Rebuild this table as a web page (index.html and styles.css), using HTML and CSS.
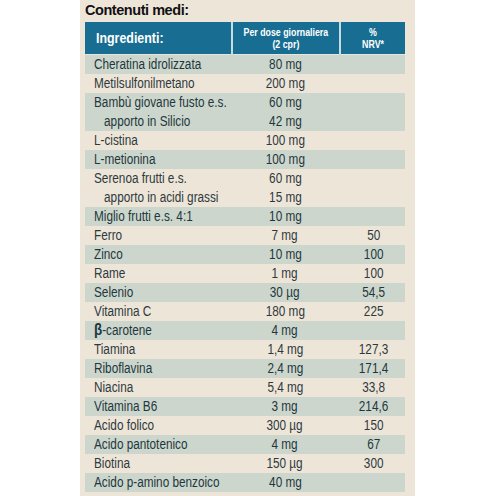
FILE: index.html
```html
<!DOCTYPE html>
<html lang="it">
<head>
  <meta charset="UTF-8">
  <meta name="viewport" content="width=device-width, initial-scale=1">
  <title>Contenuti medi</title>
  <link rel="stylesheet" href="styles.css">
</head>
<body>
  <div class="paper">
    <h2 class="title">Contenuti medi:</h2>

    <!-- Tabella dei contenuti -->
    <table class="facts">
      <thead>
        <tr>
          <th class="c-name"><span class="t">Ingredienti:</span></th>
          <th class="c-dose"><span class="t">Per dose giornaliera<br>(2 cpr)</span></th>
          <th class="c-nrv"><span class="t">%<br>NRV*</span></th>
        </tr>
      </thead>
      <tbody>
        <tr class="shade"><td><span class="t">Cheratina idrolizzata</span></td><td><span class="t">80 mg</span></td><td></td></tr>
        <tr><td><span class="t">Metilsulfonilmetano</span></td><td><span class="t">200 mg</span></td><td></td></tr>
        <tr class="shade"><td><span class="t">Bambù giovane fusto e.s.<br><span class="sub">apporto in Silicio</span></span></td><td><span class="t">60 mg<br>42 mg</span></td><td></td></tr>
        <tr><td><span class="t">L-cistina</span></td><td><span class="t">100 mg</span></td><td></td></tr>
        <tr class="shade"><td><span class="t">L-metionina</span></td><td><span class="t">100 mg</span></td><td></td></tr>
        <tr><td><span class="t">Serenoa frutti e.s.<br><span class="sub">apporto in acidi grassi</span></span></td><td><span class="t">60 mg<br>15 mg</span></td><td></td></tr>
        <tr class="shade"><td><span class="t">Miglio frutti e.s. 4:1</span></td><td><span class="t">10 mg</span></td><td></td></tr>
        <tr><td><span class="t">Ferro</span></td><td><span class="t">7 mg</span></td><td><span class="t">50</span></td></tr>
        <tr class="shade"><td><span class="t">Zinco</span></td><td><span class="t">10 mg</span></td><td><span class="t">100</span></td></tr>
        <tr><td><span class="t">Rame</span></td><td><span class="t">1 mg</span></td><td><span class="t">100</span></td></tr>
        <tr class="shade"><td><span class="t">Selenio</span></td><td><span class="t">30 µg</span></td><td><span class="t">54,5</span></td></tr>
        <tr><td><span class="t">Vitamina C</span></td><td><span class="t">180 mg</span></td><td><span class="t">225</span></td></tr>
        <tr class="shade"><td><span class="t"><b class="beta">β</b>-carotene</span></td><td><span class="t">4 mg</span></td><td></td></tr>
        <tr><td><span class="t">Tiamina</span></td><td><span class="t">1,4 mg</span></td><td><span class="t">127,3</span></td></tr>
        <tr class="shade"><td><span class="t">Riboflavina</span></td><td><span class="t">2,4 mg</span></td><td><span class="t">171,4</span></td></tr>
        <tr><td><span class="t">Niacina</span></td><td><span class="t">5,4 mg</span></td><td><span class="t">33,8</span></td></tr>
        <tr class="shade"><td><span class="t">Vitamina B6</span></td><td><span class="t">3 mg</span></td><td><span class="t">214,6</span></td></tr>
        <tr><td><span class="t">Acido folico</span></td><td><span class="t">300 µg</span></td><td><span class="t">150</span></td></tr>
        <tr class="shade"><td><span class="t">Acido pantotenico</span></td><td><span class="t">4 mg</span></td><td><span class="t">67</span></td></tr>
        <tr><td><span class="t">Biotina</span></td><td><span class="t">150 µg</span></td><td><span class="t">300</span></td></tr>
        <tr class="shade"><td><span class="t">Acido p-amino benzoico</span></td><td><span class="t">40 mg</span></td><td></td></tr>
      </tbody>
    </table>
  </div>
</body>
</html>
```

FILE: styles.css
```css
* {
  box-sizing: border-box;
  margin: 0;
  padding: 0;
}

body {
  background-color: #fff;
  font-family: 'Liberation Sans', Arial, sans-serif;
}

/* Foglio della confezione */
.paper {
  margin-left: 80px;
  width: 335px;
  height: 496px;
  background-color: #eee5d9;
  padding: 2px 0 0 5px;
  overflow: hidden;
}

.title {
  font-size: 14.5px;
  font-weight: bold;
  color: #111;
  line-height: 17px;
  letter-spacing: -0.45px;
  margin-bottom: 3px;
}

/* Testo stretto (condensed) */
.t {
  display: inline-block;
  transform: scaleX(0.84);
  transform-origin: center top;
  white-space: nowrap;
}

/* Tabella */
.facts {
  width: 320px;
  border-collapse: collapse;
  table-layout: fixed;
}

.facts th {
  background-color: #186e92;
  color: #fff;
  font-weight: bold;
  height: 32px;
  border-right: 2px solid #c7dbe0;
  border-bottom: 1px solid #e6e6dc;
  vertical-align: middle;
}

.facts th:last-child {
  border-right: none;
}

.facts .c-name {
  width: 147px;
  text-align: left;
  padding-left: 11px;
  font-size: 15.5px;
}

.facts .c-name .t {
  transform-origin: left center;
  transform: scaleX(0.8);
}

.facts .c-dose {
  width: 108px;
  font-size: 11px;
  line-height: 12px;
}

.facts .c-dose .t {
  transform: scaleX(0.8);
}

.facts .c-nrv {
  font-size: 10.5px;
  line-height: 12px;
}

.facts td {
  font-size: 14px;
  line-height: 19px;
  color: #2c3a3d;
  text-align: center;
  vertical-align: top;
}

.facts td:first-child {
  text-align: left;
  padding-left: 9px;
}

.facts td:first-child .t {
  transform-origin: left top;
}

.facts td:nth-child(2) {
  padding-right: 2px;
}

.facts td:nth-child(3) {
  padding-left: 2px;
}

.facts tr.shade td {
  background-color: #ccd6cd;
  color: #1f363c;
}

.sub {
  padding-left: 12px;
}

.beta {
  font-size: 16px;
  line-height: 14px;
}
```
